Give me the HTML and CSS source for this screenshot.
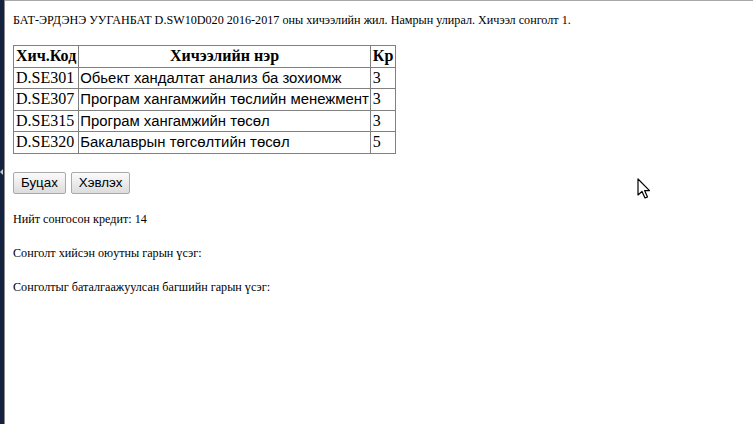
FILE: index.html
```html
<!DOCTYPE html>
<html lang="mn">
<head>
<meta charset="utf-8">
<title>Хичээл сонголт</title>
<link rel="stylesheet" href="styles.css">
</head>
<body>
<div class="frame">
  <aside class="strip"><span class="strip-arrow"></span></aside>
  <main class="page">
    <p class="title">БАТ-ЭРДЭНЭ УУГАНБАТ D.SW10D020 2016-2017 оны хичээлийн жил. Намрын улирал. Хичээл сонголт 1.</p>
    <table class="courses">
      <thead>
        <tr><th>Хич.Код</th><th>Хичээлийн нэр</th><th>Кр</th></tr>
      </thead>
      <tbody>
        <tr><td class="code">D.SE301</td><td class="name">Обьект хандалтат анализ ба зохиомж</td><td class="cr">3</td></tr>
        <tr><td class="code">D.SE307</td><td class="name">Програм хангамжийн төслийн менежмент</td><td class="cr">3</td></tr>
        <tr><td class="code">D.SE315</td><td class="name">Програм хангамжийн төсөл</td><td class="cr">3</td></tr>
        <tr><td class="code">D.SE320</td><td class="name">Бакалаврын төгсөлтийн төсөл</td><td class="cr">5</td></tr>
      </tbody>
    </table>
    <div class="actions">
      <button class="btn" type="button">Буцах</button>
      <button class="btn" type="button">Хэвлэх</button>
    </div>
    <p class="note">Нийт сонгосон кредит: 14</p>
    <p class="note">Сонголт хийсэн оюутны гарын үсэг:</p>
    <p class="note">Сонголтыг баталгаажуулсан багшийн гарын үсэг:</p>
  </main>
</div>
<svg class="cursor" width="14" height="22" viewBox="0 0 14 22" aria-hidden="true">
  <path d="M1 1 L1 17 L5 13.5 L8 20 L10.5 19 L7.6 12.6 L12.5 12.6 Z" fill="#fff" stroke="#000" stroke-width="1.2" stroke-linejoin="round"/>
</svg>
</body>
</html>
```

FILE: styles.css
```css
html, body {
  margin: 0;
  padding: 0;
  height: 100%;
  background: #fff;
}
body {
  font-family: "Liberation Serif", "Times New Roman", serif;
  color: #000;
  overflow: hidden;
}
.frame {
  display: flex;
  height: 424px;
}
.strip {
  width: 4px;
  flex: none;
  background: #14213f;
  border-right: 1px solid #8a8a8a;
  position: relative;
}
.strip-arrow {
  position: absolute;
  left: 0;
  top: 169px;
  width: 0;
  height: 0;
  border-top: 3px solid transparent;
  border-bottom: 3px solid transparent;
  border-right: 3px solid #c8ccd6;
}
.page {
  flex: 1;
  border-top: 1px solid #a8a8a8;
  padding: 10px 8px 0 8px;
}
.title {
  margin: 0;
  font-size: 12.15px;
  line-height: 18px;
}
.courses {
  margin-top: 16px;
  border-collapse: collapse;
  border: 1px solid #808080;
  font-size: 16px;
}
.courses th,
.courses td {
  border: 1px solid #808080;
  padding: 1px 2px;
  line-height: 18.6px;
  text-align: left;
}
.courses th {
  font-weight: bold;
  text-align: center;
}
.courses .name {
  font-family: "Liberation Sans", Arial, sans-serif;
  font-size: 14.9px;
  padding-left: 1px;
  padding-right: 1px;
}
.actions {
  display: flex;
  gap: 5px;
  margin-top: 18px;
}
.btn {
  font-family: "Liberation Sans", Arial, sans-serif;
  font-size: 13.33px;
  height: 22px;
  padding: 0 7px;
  border: 1px solid #a9a9a9;
  border-radius: 2px;
  background: linear-gradient(#fbfbfb, #dcdcdc);
  color: #000;
}
.note {
  margin: 16px 0 0 0;
  font-size: 12.15px;
  line-height: 18px;
}
.cursor {
  position: absolute;
  left: 637px;
  top: 178px;
}
```
